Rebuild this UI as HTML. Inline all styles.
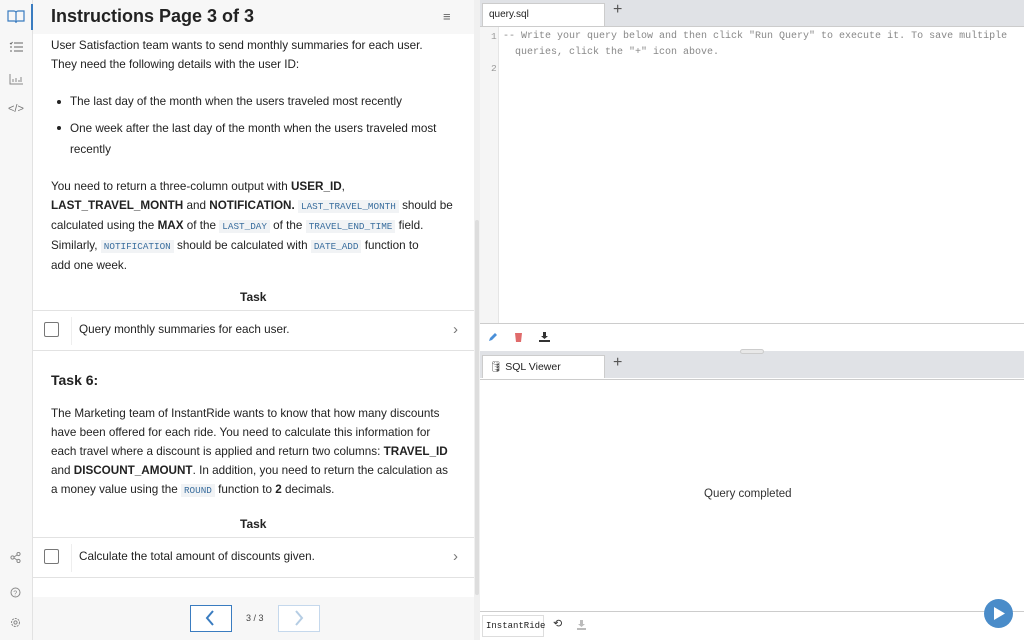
<!DOCTYPE html>
<html><head><meta charset="utf-8"><style>
*{box-sizing:border-box;margin:0;padding:0}
body{width:1024px;height:640px;overflow:hidden;background:#fff;font-family:"Liberation Sans",sans-serif;color:#222;position:relative}
.abs{position:absolute}
.side{left:0;top:0;width:33px;height:640px;background:#f7f7f7;border-right:1px solid #e2e2e2}
.left{left:33px;top:0;width:441px;height:640px;background:#fff}
.hdr{left:33px;top:0;width:441px;height:34px;background:#f7f7f7}
.t{font-size:11.7px;line-height:19px;color:#222;white-space:nowrap}
code{font-family:"Liberation Mono",monospace;font-size:9.3px;color:#3a6e9e;background:#f1f3f5;padding:1px 3px}
b{font-weight:bold}
.row{left:33px;width:441px;height:41px;border-top:1px solid #e2e2e2;border-bottom:1px solid #e2e2e2;background:#fff}
.cb{position:absolute;left:11px;top:11px;width:15px;height:15px;border:1.5px solid #777;border-radius:2px}
.sep{position:absolute;left:38px;top:6px;width:1px;height:28px;background:#eee}
.rt{position:absolute;left:46px;top:12px;font-size:11.7px}
.chev{position:absolute;right:16px;top:10px;color:#777;font-size:15px}
.mono{font-family:"Liberation Mono",monospace}
.dot{position:absolute;width:4px;height:4px;border-radius:50%;background:#222}
</style></head><body>
<div class="abs side"></div>
<div class="abs" style="left:31px;top:4px;width:2px;height:26px;background:#3a7cc0"></div>
<svg class="abs" style="left:7px;top:9px" width="18" height="14" viewBox="0 0 18 14"><path d="M1 2h6a2 2 0 0 1 2 2v9a2 2 0 0 0-2-1H1zM17 2h-6a2 2 0 0 0-2 2v9a2 2 0 0 1 2-1h6z" fill="none" stroke="#3a7cc0" stroke-width="1.2"/></svg>
<svg class="abs" style="left:9px;top:41px" width="14" height="12"><path d="M5 2h9M5 6h9M5 10h9M1 2l1 1 1.5-2M1 6h2M1 10h2" stroke="#666" fill="none"/></svg>
<svg class="abs" style="left:9px;top:73px" width="14" height="12"><path d="M1 1v10h13M4 9V6M7 9V5M10 9V7M12 9V4" stroke="#888" fill="none"/></svg>
<div class="abs" style="left:8px;top:103px;font-size:11px;color:#777">&lt;/&gt;</div>
<svg class="abs" style="left:10px;top:552px" width="11" height="11"><circle cx="2.5" cy="5.5" r="1.6" stroke="#888" fill="none"/><circle cx="8.5" cy="2" r="1.6" stroke="#888" fill="none"/><circle cx="8.5" cy="9" r="1.6" stroke="#888" fill="none"/><path d="M4 5l3-2M4 6l3 2" stroke="#888"/></svg>
<svg class="abs" style="left:10px;top:587px" width="11" height="11"><circle cx="5.5" cy="5.5" r="4.5" stroke="#888" fill="none"/><text x="3.3" y="8.3" font-size="7" fill="#888" font-family="Liberation Sans">?</text></svg>
<svg class="abs" style="left:10px;top:617px" width="11" height="11"><circle cx="5.5" cy="5.5" r="4" stroke="#888" fill="none" stroke-dasharray="2 1"/><circle cx="5.5" cy="5.5" r="1.6" stroke="#888" fill="none"/></svg>

<div class="abs left"></div>
<div class="abs hdr"></div>
<div class="abs" style="left:51px;top:6px;font-size:18px;font-weight:bold;color:#222">Instructions Page 3 of 3</div>
<div class="abs" style="left:443px;top:9px;font-size:13px;color:#666">≡</div>

<div class="abs t" style="left:51px;top:36px">User Satisfaction team wants to send monthly summaries for each user.<br>They need the following details with the user ID:</div>
<div class="dot" style="left:57px;top:100px"></div>
<div class="abs t" style="left:70px;top:92px">The last day of the month when the users traveled most recently</div>
<div class="dot" style="left:57px;top:126px"></div>
<div class="abs t" style="left:70px;top:118px;line-height:21px">One week after the last day of the month when the users traveled most<br>recently</div>
<div class="abs t" style="left:51px;top:177px">You need to return a three-column output with <b>USER_ID</b>,<br><b>LAST_TRAVEL_MONTH</b> and <b>NOTIFICATION.</b> <code>LAST_TRAVEL_MONTH</code> should be<br>calculated using the <b>MAX</b> of the <code>LAST_DAY</code> of the <code>TRAVEL_END_TIME</code> field.<br>Similarly, <code>NOTIFICATION</code> should be calculated with <code>DATE_ADD</code> function to<br>add one week.</div>
<div class="abs" style="left:240px;top:290px;font-size:12px;font-weight:bold">Task</div>
<div class="abs row" style="top:310px"><div class="cb"></div><div class="sep"></div><div class="rt">Query monthly summaries for each user.</div><div class="chev">›</div></div>
<div class="abs" style="left:51px;top:372px;font-size:14px;font-weight:bold">Task 6:</div>
<div class="abs t" style="left:51px;top:404px">The Marketing team of InstantRide wants to know that how many discounts<br>have been offered for each ride. You need to calculate this information for<br>each travel where a discount is applied and return two columns: <b>TRAVEL_ID</b><br>and <b>DISCOUNT_AMOUNT</b>. In addition, you need to return the calculation as<br>a money value using the <code>ROUND</code> function to <b>2</b> decimals.</div>
<div class="abs" style="left:240px;top:517px;font-size:12px;font-weight:bold">Task</div>
<div class="abs row" style="top:537px"><div class="cb"></div><div class="sep"></div><div class="rt">Calculate the total amount of discounts given.</div><div class="chev">›</div></div>
<div class="abs" style="left:33px;top:597px;width:441px;height:43px;background:#f7f7f7"></div>
<div class="abs" style="left:190px;top:605px;width:42px;height:27px;border:1.5px solid #3a7cc0;background:#fff"></div>
<svg class="abs" style="left:205px;top:610px" width="10" height="16"><path d="M8 1L2 8l6 7" stroke="#3a7cc0" stroke-width="2" fill="none"/></svg>
<div class="abs" style="left:246px;top:613px;font-size:9px;color:#444">3 / 3</div>
<div class="abs" style="left:278px;top:605px;width:42px;height:27px;border:1.5px solid #c5d8ec;background:#fff"></div>
<svg class="abs" style="left:294px;top:610px" width="10" height="16"><path d="M2 1l6 7-6 7" stroke="#b5cde4" stroke-width="2" fill="none"/></svg>
<div class="abs" style="left:474px;top:0;width:6px;height:640px;background:#f0f0f0"></div>
<div class="abs" style="left:475px;top:220px;width:4px;height:375px;background:#ddd;border-radius:2px"></div>

<!-- right -->
<div class="abs" style="left:480px;top:0;width:544px;height:26px;background:#e0e2e6"></div>
<div class="abs" style="left:482px;top:3px;width:123px;height:24px;background:#fff;border:1px solid #ccc;border-bottom:none;font-size:10px;padding:5px 6px">query.sql</div>
<div class="abs" style="left:613px;top:1px;font-size:16px;color:#555">+</div>
<div class="abs" style="left:480px;top:26px;width:544px;height:1px;background:#ccc"></div>
<div class="abs" style="left:480px;top:27px;width:19px;height:296px;background:#f5f5f5;border-right:1px solid #e5e5e5"></div>
<div class="abs mono" style="left:491px;top:29px;font-size:9.5px;color:#999;line-height:16px">1<br><br>2</div>
<div class="abs mono" style="left:503px;top:29px;font-size:10px;color:#888;line-height:16px;white-space:nowrap">-- Write your query below and then click "Run Query" to execute it. To save multiple<br>&nbsp;&nbsp;queries, click the "+" icon above.</div>
<div class="abs" style="left:480px;top:323px;width:544px;height:1px;background:#ccc"></div>
<svg class="abs" style="left:488px;top:332px" width="10" height="10"><path d="M1 9l1-3 5-5 2 2-5 5z" fill="#4a90d9"/></svg>
<svg class="abs" style="left:514px;top:332px" width="9" height="10"><path d="M1 1h7l-1 9H2z" fill="#e06b6b"/></svg>
<svg class="abs" style="left:539px;top:332px" width="11" height="10"><path d="M4 0h3v4h2l-3.5 3L2 4h2zM0 8h11v2H0z" fill="#333"/></svg>
<div class="abs" style="left:480px;top:351px;width:544px;height:27px;background:#e0e2e6"></div>
<div class="abs" style="left:740px;top:349px;width:24px;height:5px;background:#e8e8e8;border:1px solid #ccc;border-radius:3px"></div>
<div class="abs" style="left:482px;top:355px;width:123px;height:23px;background:#fff;border:1px solid #ccc;border-bottom:none;font-size:10.5px;padding:4px 6px"><span style="color:#555">🛢</span> SQL Viewer</div>
<div class="abs" style="left:613px;top:354px;font-size:16px;color:#555">+</div>
<div class="abs" style="left:480px;top:379px;width:544px;height:1px;background:#ccc"></div>
<div class="abs" style="left:704px;top:488px;font-size:11.5px;color:#333">Query completed</div>
<div class="abs" style="left:480px;top:611px;width:544px;height:1px;background:#ccc"></div>
<div class="abs mono" style="left:482px;top:615px;width:62px;height:22px;border:1px solid #ddd;font-size:9px;padding:5px 3px">InstantRide</div>
<div class="abs" style="left:553px;top:617px;font-size:11px;color:#333">⟲</div>
<svg class="abs" style="left:577px;top:620px" width="9" height="10"><path d="M3 0h3v4h2L4.5 7 1 4h2zM0 8h9v2H0z" fill="#bbb"/></svg>
<div class="abs" style="left:984px;top:599px;width:29px;height:29px;border-radius:50%;background:#4a8cc9"></div>
<svg class="abs" style="left:993px;top:606px" width="13" height="15"><path d="M1 1l11 6.5L1 14z" fill="#fff"/></svg>
</body></html>
